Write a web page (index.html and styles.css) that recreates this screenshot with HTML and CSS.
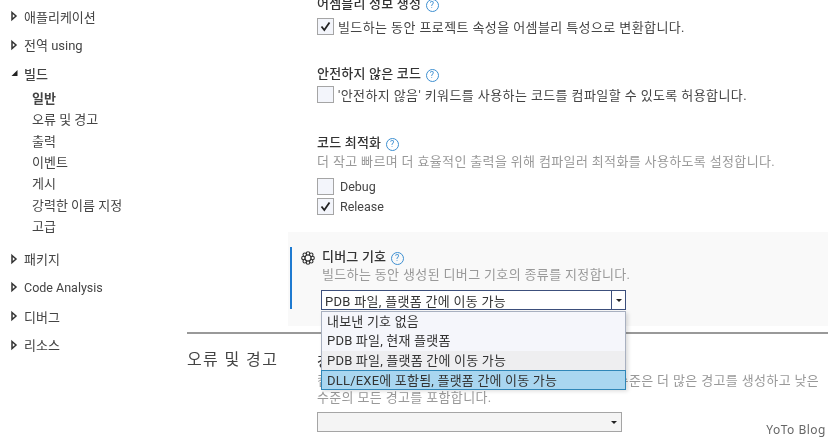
FILE: index.html
```html
<!DOCTYPE html>
<html lang="ko">
<head>
    <meta charset="UTF-8">
    <title>빌드 속성</title>
    <link rel="stylesheet" href="styles.css">
</head>
<body>
    <div class="page">
        <nav class="sidebar">
            <div class="tree-item">
                <svg class="arrow" viewBox="0 0 7 12"><path d="M1 2.5 L5 6 L1 9.5 Z"/></svg>
                <span>애플리케이션</span>
            </div>
            <div class="tree-item">
                <svg class="arrow" viewBox="0 0 7 12"><path d="M1 2.5 L5 6 L1 9.5 Z"/></svg>
                <span>전역 using</span>
            </div>
            <div class="tree-item">
                <svg class="arrow" viewBox="0 0 7 12"><path class="solid" d="M0.5 9 L6.5 9 L6.5 3 Z"/></svg>
                <span class="open-title">빌드</span>
            </div>
            <ul class="sub-list">
                <li class="current">일반</li>
                <li>오류 및 경고</li>
                <li>출력</li>
                <li>이벤트</li>
                <li>게시</li>
                <li>강력한 이름 지정</li>
                <li>고급</li>
            </ul>
            <div class="tree-item">
                <svg class="arrow" viewBox="0 0 7 12"><path d="M1 2.5 L5 6 L1 9.5 Z"/></svg>
                <span>패키지</span>
            </div>
            <div class="tree-item">
                <svg class="arrow" viewBox="0 0 7 12"><path d="M1 2.5 L5 6 L1 9.5 Z"/></svg>
                <span class="latin">Code Analysis</span>
            </div>
            <div class="tree-item">
                <svg class="arrow" viewBox="0 0 7 12"><path d="M1 2.5 L5 6 L1 9.5 Z"/></svg>
                <span>디버그</span>
            </div>
            <div class="tree-item">
                <svg class="arrow" viewBox="0 0 7 12"><path d="M1 2.5 L5 6 L1 9.5 Z"/></svg>
                <span>리소스</span>
            </div>
        </nav>

        <main class="content">
            <section class="option first">
                <h3>어셈블리 정보 생성 <span class="help">?</span></h3>
                <label class="check-row">
                    <span class="checkbox"><svg viewBox="0 0 15 15"><path d="M3.5 7.5 L6.3 11 L11.5 3.5"/></svg></span>
                    빌드하는 동안 프로젝트 속성을 어셈블리 특성으로 변환합니다.
                </label>
            </section>

            <section class="option unsafe">
                <h3>안전하지 않은 코드 <span class="help">?</span></h3>
                <label class="check-row">
                    <span class="checkbox"></span>
                    '안전하지 않음' 키워드를 사용하는 코드를 컴파일할 수 있도록 허용합니다.
                </label>
            </section>

            <section class="option optimize">
                <h3>코드 최적화 <span class="help">?</span></h3>
                <p class="desc">더 작고 빠르며 더 효율적인 출력을 위해 컴파일러 최적화를 사용하도록 설정합니다.</p>
                <label class="check-row small">
                    <span class="checkbox"></span>
                    Debug
                </label>
                <label class="check-row small">
                    <span class="checkbox"><svg viewBox="0 0 15 15"><path d="M3.5 7.5 L6.3 11 L11.5 3.5"/></svg></span>
                    Release
                </label>
            </section>

            <section class="panel">
                <div class="panel-inner">
                    <svg class="gear" viewBox="0 0 16 16">
                        <circle cx="8" cy="2.8" r="2"/>
                        <circle cx="8" cy="13.2" r="2"/>
                        <circle cx="2.8" cy="8" r="2"/>
                        <circle cx="13.2" cy="8" r="2"/>
                        <circle cx="4.3" cy="4.3" r="2"/>
                        <circle cx="11.7" cy="4.3" r="2"/>
                        <circle cx="4.3" cy="11.7" r="2"/>
                        <circle cx="11.7" cy="11.7" r="2"/>
                        <circle class="gear-hub" cx="8" cy="8" r="3.4"/>
                    </svg>
                    <h3>디버그 기호 <span class="help">?</span></h3>
                    <p class="desc">빌드하는 동안 생성된 디버그 기호의 종류를 지정합니다.</p>
                    <div class="select open">
                        <span class="select-value">PDB 파일, 플랫폼 간에 이동 가능</span>
                        <span class="select-btn"><i class="caret"></i></span>
                    </div>
                    <ul class="dropdown">
                        <li>내보낸 기호 없음</li>
                        <li>PDB 파일, 현재 플랫폼</li>
                        <li class="hover">PDB 파일, 플랫폼 간에 이동 가능</li>
                        <li class="selected">DLL/EXE에 포함됨, 플랫폼 간에 이동 가능</li>
                    </ul>
                </div>
            </section>

            <section class="group">
                <h2>오류 및 경고</h2>
                <div class="group-body">
                    <h3>경고 수준</h3>
                    <p class="desc">컴파일러에서 경고의 표시 수준을 지정합니다. 더 높은 수준은 더 많은 경고를 생성하고 낮은 수준의 모든 경고를 포함합니다.</p>
                    <div class="select plain">
                        <span class="select-value"></span>
                        <i class="caret"></i>
                    </div>
                </div>
            </section>
        </main>
    </div>
    <div class="watermark">YoTo Blog</div>
</body>
</html>
```

FILE: styles.css
```css
html, body {
    margin: 0;
    height: 438px;
    overflow: hidden;
    background-color: white;
}
body {
    font-family: Roboto, "Noto Sans CJK KR", sans-serif;
    font-size: 13px;
    color: #444;
    position: relative;
    filter: blur(0.4px);
}
h2, h3, p, ul {
    margin: 0;
    padding: 0;
}
ul {
    list-style: none;
}
.page {
    display: flex;
    width: 828px;
}
.sidebar {
    width: 187px;
    flex: none;
    padding: 2px 0 0 11px;
    box-sizing: border-box;
}
.tree-item {
    display: flex;
    align-items: center;
    height: 28.6px;
    gap: 6px;
    color: #444;
}
.open-title {
    font-weight: 500;
}
.latin {
    font-size: 12.5px;
}
.arrow {
    width: 7px;
    height: 12px;
    flex: none;
}
.arrow path {
    fill: #fff;
    stroke: #333;
    stroke-width: 1.5;
}
.arrow path.solid {
    fill: #222;
    stroke: none;
}
.sub-list {
    padding: 0 0 7px 21px;
}
.sub-list li {
    height: 21.4px;
    line-height: 21.4px;
}
.sub-list .current {
    font-weight: 700;
}
.content {
    flex: 1;
    margin-top: -5px;
    min-width: 0;
}
.option {
    padding-left: 130px;
}
h3 {
    font-size: 13px;
    font-weight: 500;
    line-height: 21px;
    letter-spacing: 0.2px;
    color: #333;
}
.first h3 {
    margin-top: -2px;
    margin-bottom: 2px;
}
.help {
    display: inline-block;
    width: 11px;
    height: 11px;
    margin-left: 1px;
    border: 1px solid #3d8fd1;
    border-radius: 50%;
    color: #3d8fd1;
    font-size: 9px;
    font-weight: 400;
    line-height: 11px;
    text-align: center;
    vertical-align: 0;
}
.check-row {
    display: flex;
    align-items: center;
    gap: 4px;
    height: 20px;
    letter-spacing: 0.4px;
}
.check-row.small {
    gap: 6px;
    font-size: 12.5px;
    letter-spacing: 0;
}
.checkbox {
    width: 15px;
    height: 15px;
    flex: none;
    border: 1px solid #a5a5a5;
    background-color: #f3f5fb;
}
.checkbox svg {
    display: block;
    width: 15px;
    height: 15px;
}
.checkbox path {
    fill: none;
    stroke: #222;
    stroke-width: 1.8;
}
.first {
    height: 70px;
}
.unsafe {
    height: 69px;
}
.optimize {
    height: 100px;
}
.desc {
    color: #999;
    line-height: 17px;
    letter-spacing: 0.35px;
}
.optimize .desc {
    margin-bottom: 6px;
}
.panel {
    margin-left: 101px;
    padding: 16px 0 17px 2px;
    background-color: #f9f9f9;
}
.panel-inner {
    position: relative;
    height: 62px;
    padding-left: 30px;
    border-left: 2px solid #1e7ad0;
    box-sizing: border-box;
}
.panel h3 {
    margin-top: -1px;
    line-height: 19px;
}
.gear {
    position: absolute;
    left: 9px;
    top: 4px;
    width: 14px;
    height: 14px;
}
.gear circle {
    fill: none;
    stroke: #333;
    stroke-width: 1.3;
}
.gear .gear-hub {
    fill: #f9f9f9;
}
.select {
    display: flex;
    align-items: center;
    height: 20px;
    box-sizing: border-box;
    border: 1px solid #3c4f7c;
    background-color: white;
    width: 305px;
    margin-top: 7px;
}
.panel-inner .select {
    margin-left: -1px;
}
.select-value {
    flex: 1;
    padding-left: 3px;
    color: #333;
    letter-spacing: 0.3px;
}
.select-btn {
    display: flex;
    align-items: center;
    justify-content: center;
    width: 13px;
    height: 100%;
    border-left: 1px solid #3c4f7c;
}
.caret {
    display: block;
    width: 0;
    height: 0;
    border-left: 3px solid transparent;
    border-right: 3px solid transparent;
    border-top: 3px solid #222;
}
.dropdown {
    position: absolute;
    left: 29px;
    top: 64px;
    z-index: 2;
    width: 305px;
    height: 78px;
    box-sizing: border-box;
    border: 1px solid #a8b0c0;
    background-color: #f5f6fb;
    color: #333;
    box-shadow: 2px 2px 4px rgba(0,0,0,0.15);
}
.dropdown li {
    height: 19.4px;
    line-height: 19px;
    padding-left: 5px;
    letter-spacing: 0.2px;
}
.dropdown .hover {
    background-color: #eeeef0;
}
.dropdown .selected {
    margin: 0 -1px;
    height: 20px;
    box-sizing: border-box;
    border: 1px solid #2f86b8;
    background-color: #a9d6f0;
}
.group {
    display: flex;
    margin-top: 6px;
    border-top: 2px solid #999;
}
.group h2 {
    width: 130px;
    flex: none;
    padding-top: 14px;
    font-size: 16px;
    font-weight: 400;
    line-height: 24px;
    letter-spacing: 1.4px;
    color: #444;
}
.group-body {
    flex: 1;
    padding-top: 17px;
    padding-right: 5px;
}
.select.plain {
    width: 305px;
    margin-top: 6px;
    border-color: #a5a5a5;
    background-color: #f4f4f4;
    justify-content: flex-end;
    padding-right: 4px;
}
.select.plain .select-value {
    padding: 0;
}
.watermark {
    position: absolute;
    right: 2px;
    bottom: 0;
    color: #666;
    font-family: "Noto Sans", sans-serif;
    font-size: 12px;
    letter-spacing: 0.5px;
}
```
